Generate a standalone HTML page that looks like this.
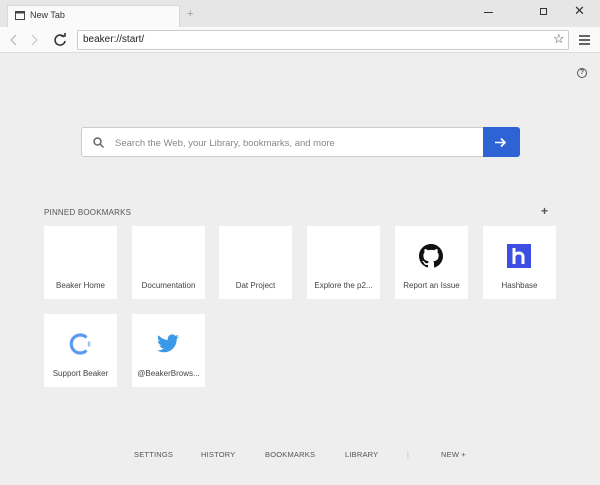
<!DOCTYPE html><html><head><style>
*{margin:0;padding:0;box-sizing:border-box}
body{width:600px;height:485px;background:#eeeeee;font-family:"Liberation Sans",sans-serif;position:relative;overflow:hidden;color:#444}
.abs{position:absolute}
.tile{position:absolute;width:73px;height:73px;background:#fff;font-size:8px;color:#444;text-align:center}
.tile span{position:absolute;left:0;right:0;top:55px}
.tile svg{position:absolute;left:24px;top:18px}
.nav{position:absolute;top:450px;font-size:7.5px;color:#555;letter-spacing:.2px}
</style></head><body>
<div class="abs" style="left:0;top:0;width:600px;height:27px;background:#e6e6e6"></div>
<div class="abs" style="left:7px;top:5px;width:173px;height:22px;background:#fafafa;border:1px solid #d8d8d8;border-bottom:none"></div>
<svg class="abs" style="left:15px;top:11px" width="10" height="9"><rect x=".5" y=".5" width="9" height="8" fill="none" stroke="#444"/><rect x="0" y="0" width="10" height="2.5" fill="#444"/></svg>
<div class="abs" style="left:30px;top:10px;font-size:9px;color:#333">New Tab</div>
<div class="abs" style="left:187px;top:8px;font-size:11px;color:#999">+</div>
<div class="abs" style="left:484px;top:12px;width:9px;height:1px;background:#333"></div>
<div class="abs" style="left:540px;top:8px;width:7px;height:7px;border:1px solid #333"></div>
<div class="abs" style="left:574px;top:3px;font-size:13px;color:#333">✕</div>
<div class="abs" style="left:0;top:27px;width:600px;height:26px;background:#fafafa;border-bottom:1px solid #ddd"></div>
<svg class="abs" style="left:10px;top:33px" width="60" height="14" fill="none" stroke-width="1.3"><path d="M6 2 L1 7 L6 12" stroke="#bbb"/><path d="M22 2 L27 7 L22 12" stroke="#ccc"/><path d="M54 4 A5 5 0 1 0 55 8" stroke="#333" stroke-width="1.6"/><path d="M51 3 L55 3 L55 0" stroke="#333" stroke-width="1.6"/></svg>
<div class="abs" style="left:77px;top:30px;width:492px;height:20px;background:#fff;border:1px solid #ccc;border-radius:2px"></div>
<div class="abs" style="left:83px;top:34px;font-size:10px;color:#222">beaker://start/</div>
<div class="abs" style="left:553px;top:31px;font-size:13px;color:#444">☆</div>
<svg class="abs" style="left:579px;top:35px" width="11" height="10"><path d="M0 1h11M0 5h11M0 9h11" stroke="#333" stroke-width="1.5"/></svg>
<div class="abs" style="left:577px;top:68px;width:10px;height:10px;border:1px solid #555;border-radius:50%;font-size:7px;text-align:center;line-height:8px;color:#555;font-weight:bold">?</div>
<div class="abs" style="left:81px;top:127px;width:439px;height:30px;background:#fff;border:1px solid #ccc;border-radius:3px"></div>
<svg class="abs" style="left:93px;top:137px" width="11" height="11" fill="none" stroke="#666" stroke-width="1.5"><circle cx="4.5" cy="4.5" r="3.5"/><path d="M7 7l3.5 3.5"/></svg>
<div class="abs" style="left:115px;top:138px;font-size:9.5px;color:#888">Search the Web, your Library, bookmarks, and more</div>
<div class="abs" style="left:483px;top:127px;width:37px;height:30px;background:#2e63d6;border-radius:0 3px 3px 0"></div>
<svg class="abs" style="left:495px;top:137px" width="12" height="11" fill="none" stroke="#fff" stroke-width="1.6"><path d="M0 5.5h10M6 1.5l4 4-4 4"/></svg>
<div class="abs" style="left:44px;top:208px;font-size:8px;color:#555;letter-spacing:.2px">PINNED BOOKMARKS</div>
<div class="abs" style="left:541px;top:204px;font-size:12px;color:#555;font-weight:bold">+</div>
<div class="tile" style="left:44px;top:226px"><span>Beaker Home</span></div>
<div class="tile" style="left:132px;top:226px"><span>Documentation</span></div>
<div class="tile" style="left:219px;top:226px"><span>Dat Project</span></div>
<div class="tile" style="left:307px;top:226px"><span>Explore the p2...</span></div>
<div class="tile" style="left:395px;top:226px"><svg width="24" height="24" viewBox="0 0 16 16"><path fill="#111" d="M8 0C3.58 0 0 3.58 0 8c0 3.54 2.290 6.53 5.47 7.59.4.07.55-.17.55-.38v-1.33c-2.23.48-2.7-1.07-2.7-1.07-.36-.93-.89-1.17-.89-1.17-.73-.5.06-.49.06-.49.8.06 1.23.83 1.23.83.72 1.22 1.87.87 2.33.66.07-.52.28-.87.51-1.070-1.78-.2-3.64-.89-3.64-3.95 0-.87.31-1.59.82-2.15-.08-.2-.36-1.02.08-2.12 0 0 .67-.21 2.2.82a7.6 7.6 0 014 0c1.53-1.04 2.2-.82 2.2-.82.44 1.1.16 1.92.08 2.12.51.56.82 1.27.82 2.15 0 3.07-1.87 3.75-3.65 3.95.29.25.54.73.54 1.48v2.2c0 .21.15.46.55.38A8 8 0 0016 8c0-4.42-3.58-8-8-8z"/></svg><span>Report an Issue</span></div>
<div class="tile" style="left:483px;top:226px"><svg width="24" height="24"><rect width="24" height="24" fill="#3d4fe0"/><path d="M7 4v16M7 12c1-2 3-3 5-3s4 1 4 4v7" stroke="#fff" stroke-width="3" fill="none"/></svg><span>Hashbase</span></div>
<div class="tile" style="left:44px;top:314px"><svg width="24" height="24" fill="none"><path d="M18.5 5.5A9 9 0 1 0 18.5 18.5" stroke="#5b9bef" stroke-width="3.2"/><path d="M21 9.5v5" stroke="#9cc2f4" stroke-width="2.5"/></svg><span>Support Beaker</span></div>
<div class="tile" style="left:132px;top:314px"><svg width="24" height="24" viewBox="0 0 24 24"><path fill="#3b9ae8" d="M23 4.6a9 9 0 01-2.6.7 4.6 4.6 0 002-2.5 9 9 0 01-2.9 1.1 4.5 4.5 0 00-7.7 4.1A12.8 12.8 0 012.5 3.3a4.5 4.5 0 001.4 6 4.5 4.5 0 01-2-.6 4.5 4.5 0 003.6 4.5 4.5 4.5 0 01-2 .1 4.5 4.5 0 004.2 3.1A9 9 0 011 18.3 12.8 12.8 0 007.9 20.3c8.3 0 12.8-6.9 12.8-12.8v-.6A9 9 0 0023 4.6z"/></svg><span>@BeakerBrows...</span></div>
<div class="nav" style="left:134px">SETTINGS</div>
<div class="nav" style="left:201px">HISTORY</div>
<div class="nav" style="left:265px">BOOKMARKS</div>
<div class="nav" style="left:345px">LIBRARY</div>
<div class="nav" style="left:407px;color:#bbb">|</div>
<div class="nav" style="left:441px">NEW +</div>
</body></html>
